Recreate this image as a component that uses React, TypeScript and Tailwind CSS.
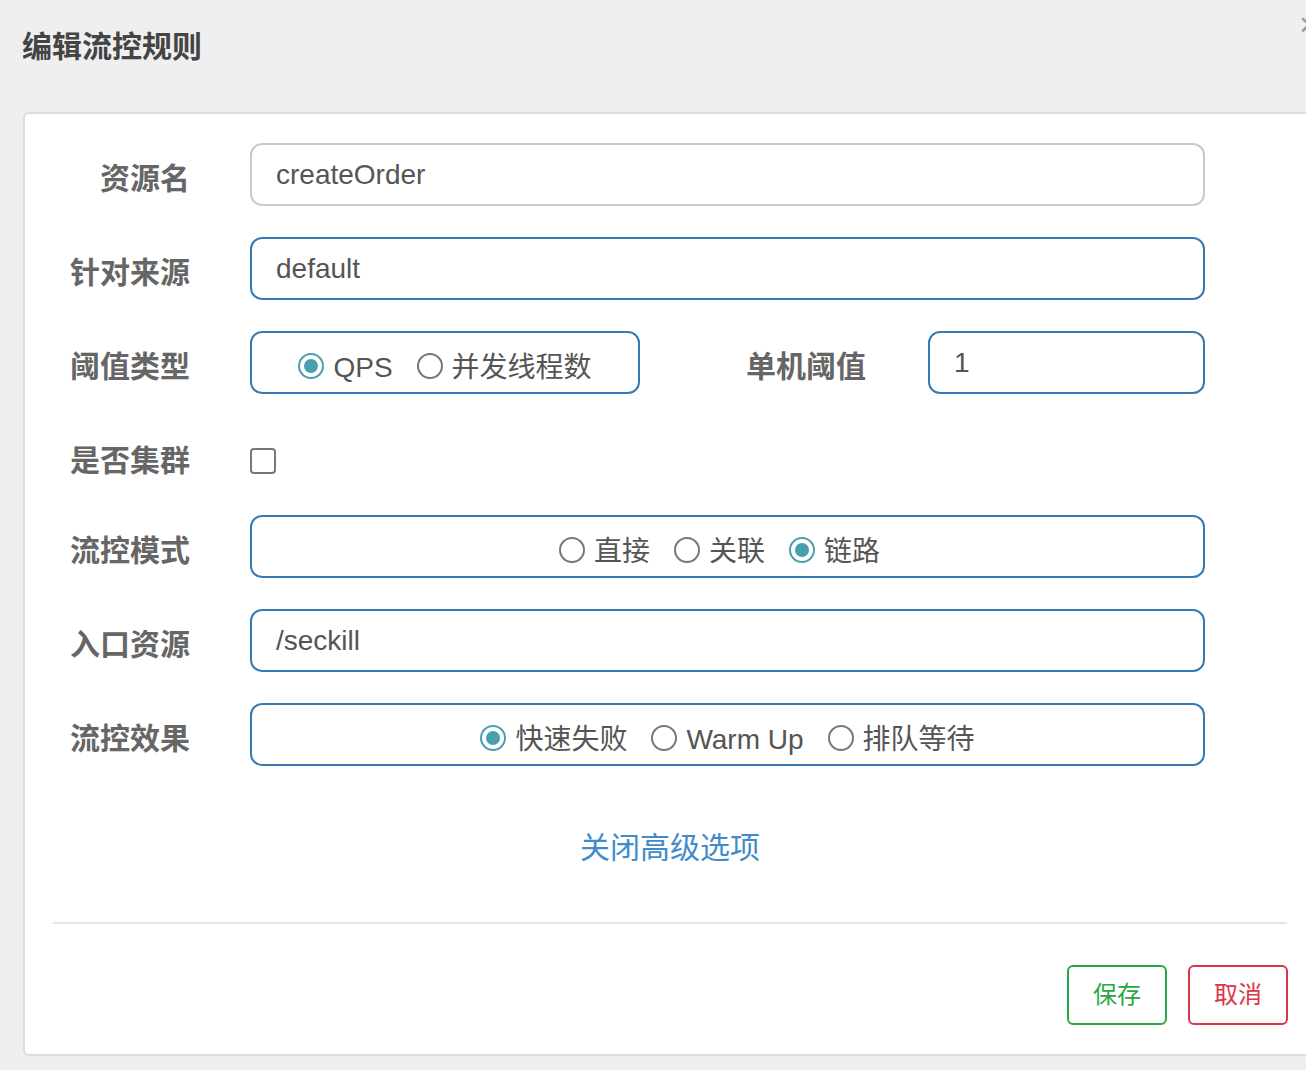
import React from 'react';

function Radio({ checked, label }: { checked?: boolean; label: string }) {
  return (
    <label className="flex items-center gap-[9px]">
      <span
        className={
          checked
            ? 'flex items-center justify-center w-[26px] h-[26px] rounded-full border-2 border-[#4a9fae] bg-white'
            : 'flex items-center justify-center w-[26px] h-[26px] rounded-full border-2 border-[#777] bg-white'
        }
      >
        {checked && <span className="w-[14px] h-[14px] rounded-full bg-[#4a9fae]" />}
      </span>
      <span className="text-[28px] leading-[36px] text-[#555] pt-[4px]">{label}</span>
    </label>
  );
}

function Label({ children, className = '' }: { children: React.ReactNode; className?: string }) {
  return (
    <div className={`text-right font-bold text-[30px] leading-[40px] text-[#666] pt-2 ${className}`}>
      {children}
    </div>
  );
}

const inputCls =
  'h-[63px] rounded-[12px] border-2 border-[#337ab7] bg-white px-[24px] flex items-center text-[28px] text-[#555]';

export default function App() {
  return (
    <div className="relative w-[1306px] h-[1070px] overflow-hidden bg-[#efefef] font-['Liberation_Sans','Noto_Sans_CJK_SC',sans-serif]">
      {/* header */}
      <div className="h-[112px] pl-[22px] pt-[27px]">
        <h1 className="font-bold text-[30px] leading-[40px] text-[#444]">编辑流控规则</h1>
      </div>
      <span className="absolute left-[1299px] top-[4px] text-[34px] leading-[40px] text-[#999]">×</span>

      {/* panel */}
      <div className="ml-[23px] w-[1300px] rounded-[6px] border-2 border-[#dcdcdc] bg-white pt-[29px] pb-[29px] pl-[28px] pr-[29px]">
        <div className="flex flex-col gap-[31px]">
          <div className="flex items-center h-[63px]">
            <Label className="w-[137px]">资源名</Label>
            <div className={`${inputCls} ml-[60px] w-[955px] border-[#cacaca] bg-[#eeeeee]`}>createOrder</div>
          </div>

          <div className="flex items-center h-[63px]">
            <Label className="w-[137px]">针对来源</Label>
            <div className={`${inputCls} ml-[60px] w-[955px]`}>default</div>
          </div>

          <div className="flex items-center h-[63px]">
            <Label className="w-[137px]">阈值类型</Label>
            <div className={`${inputCls} ml-[60px] w-[390px] justify-center gap-[24px] pt-[6px]`}>
              <Radio checked label="QPS" />
              <Radio label="并发线程数" />
            </div>
            <Label className="w-[226px]">单机阈值</Label>
            <div className={`${inputCls} ml-[62px] w-[277px]`}>1</div>
          </div>

          <div className="flex items-center h-[59px]">
            <Label className="w-[137px] mt-[5px]">是否集群</Label>
            <span className="ml-[60px] mt-[13px] w-[26px] h-[26px] rounded-[4px] border-2 border-[#777] bg-white" />
          </div>

          <div className="flex items-center h-[63px]">
            <Label className="w-[137px]">流控模式</Label>
            <div className={`${inputCls} ml-[60px] w-[955px] justify-center gap-[24px] pt-[6px] pr-[40px]`}>
              <Radio label="直接" />
              <Radio label="关联" />
              <Radio checked label="链路" />
            </div>
          </div>

          <div className="flex items-center h-[63px]">
            <Label className="w-[137px]">入口资源</Label>
            <div className={`${inputCls} ml-[60px] w-[955px]`}>/seckill</div>
          </div>

          <div className="flex items-center h-[63px]">
            <Label className="w-[137px]">流控效果</Label>
            <div className={`${inputCls} ml-[60px] w-[955px] justify-center gap-[24px] pt-[6px]`}>
              <Radio checked label="快速失败" />
              <Radio label="Warm Up" />
              <Radio label="排队等待" />
            </div>
          </div>
        </div>

        <div className="w-[1234px] mt-[62px] text-center">
          <a className="text-[30px] leading-[40px] text-[#428bca]">关闭高级选项</a>
        </div>

        <div className="w-[1234px] mt-[54px] border-t-2 border-[#e5e5e5]" />

        <div className="w-[1235px] mt-[41px] flex justify-end gap-[21px]">
          <button className="w-[100px] h-[60px] rounded-[6px] border-2 border-[#28a745] text-[24px] text-[#28a745] bg-white">
            保存
          </button>
          <button className="w-[100px] h-[60px] rounded-[6px] border-2 border-[#dc3545] text-[24px] text-[#dc3545] bg-white">
            取消
          </button>
        </div>
      </div>
    </div>
  );
}
